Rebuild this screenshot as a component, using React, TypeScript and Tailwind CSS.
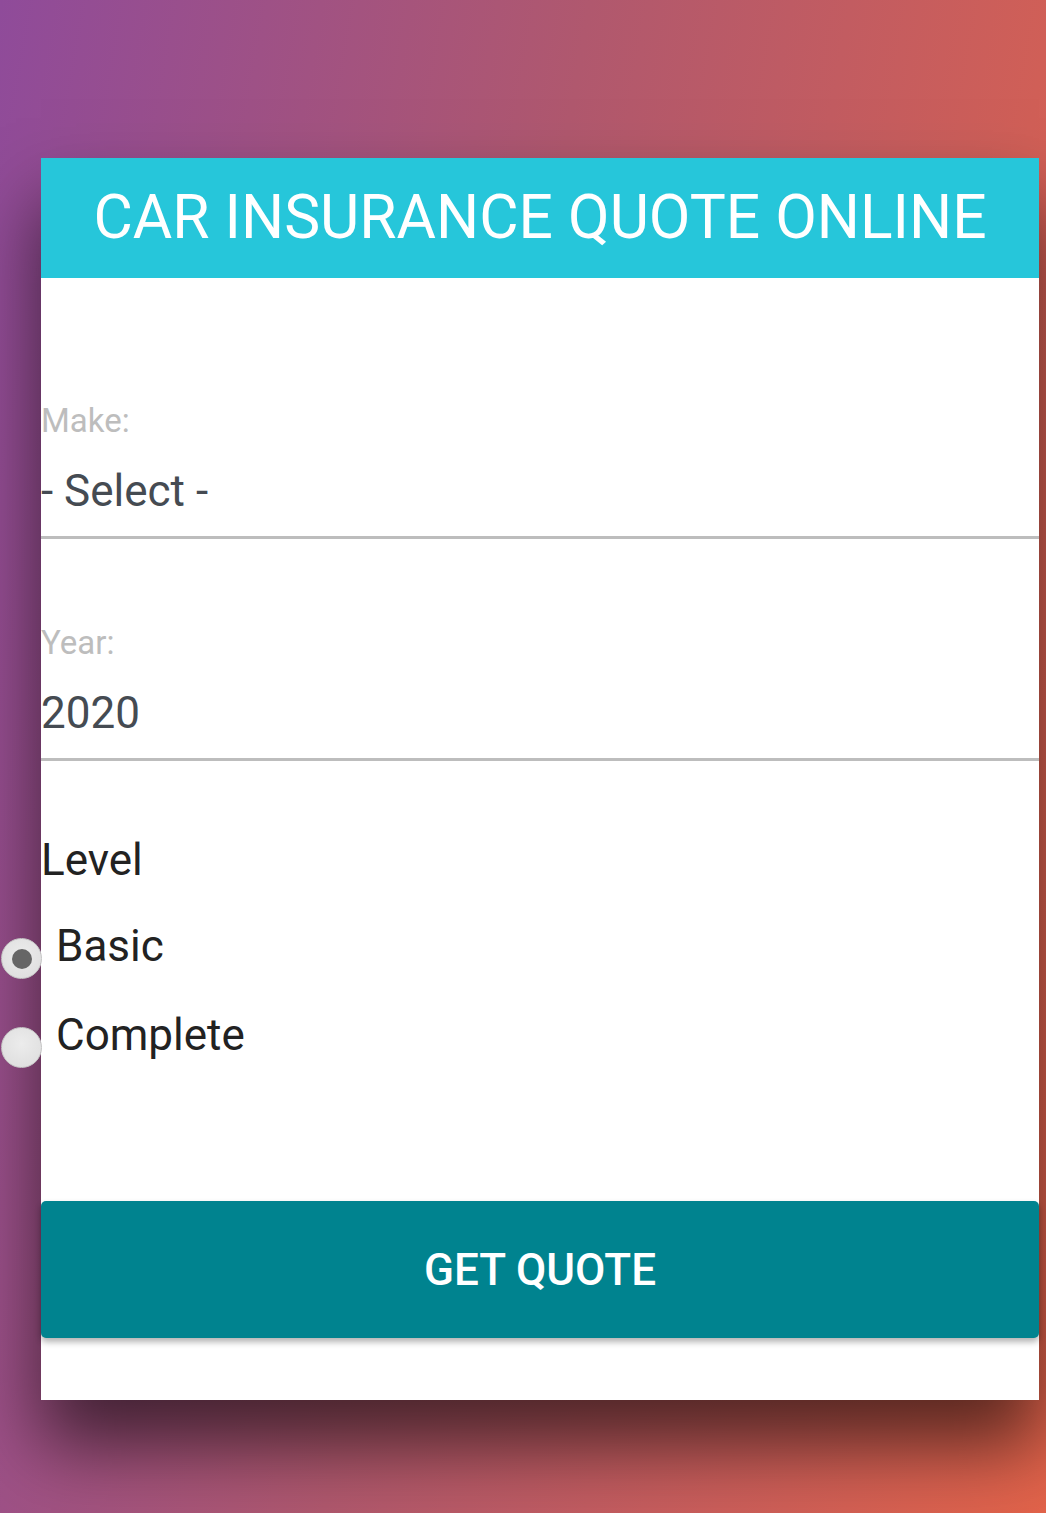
import React from "react";

export default function App() {
  return (
    <div
      className="relative w-[1046px] h-[1513px] overflow-hidden pt-[158px] pl-[41px]"
      style={{ fontFamily: "Roboto, 'Liberation Sans', sans-serif" }}
    >
      <div className="absolute inset-0 bg-[linear-gradient(100deg,#8f4b9a_0%,#b0586e_45%,#e2634a_100%)]" />
      <div className="relative w-[998px] h-[1242px] bg-white shadow-[0_45px_70px_rgba(0,0,0,0.6)]">
        <div className="h-[120px] bg-[#26c6da] flex items-center justify-center">
          <h1 className="text-white text-[60.5px] leading-none font-normal">
            CAR INSURANCE QUOTE ONLINE
          </h1>
        </div>
        <div className="pt-[123px]">
          <div className="text-[#bdbdbd] text-[33px] leading-[40px]">Make:</div>
          <div className="text-[#454b52] text-[44px] leading-[56px] mt-[22px] pb-[17px] border-b-[3px] border-[#bdbdbd]">
            - Select -
          </div>
          <div className="text-[#bdbdbd] text-[33px] leading-[40px] mt-[84px]">Year:</div>
          <div className="text-[#454b52] text-[44px] leading-[56px] mt-[22px] pb-[17px] border-b-[3px] border-[#bdbdbd]">
            2020
          </div>
          <div className="text-[#222] text-[44px] leading-[56px] mt-[71px]">Level</div>
          <div className="mt-[30px] flex flex-col gap-[28px]">
            <label className="flex items-start -ml-[40px]">
              <span className="w-[41px] h-[41px] rounded-full bg-[radial-gradient(circle_at_50%_40%,#ececec,#dcdcdc)] border border-[#c4c4c4] flex items-center justify-center mt-[20px] shrink-0">
                <span className="w-[20px] h-[20px] rounded-full bg-[#666]" />
              </span>
              <span className="ml-[14px] text-[#222] text-[44px] leading-[56px]">Basic</span>
            </label>
            <label className="flex items-start -ml-[40px]">
              <span className="w-[41px] h-[41px] rounded-full bg-[radial-gradient(circle_at_50%_40%,#ececec,#dcdcdc)] border border-[#c4c4c4] mt-[20px] shrink-0" />
              <span className="ml-[14px] text-[#222] text-[44px] leading-[56px]">Complete</span>
            </label>
          </div>
          <button className="mt-[133px] w-full h-[137px] bg-[#00838f] rounded-[5px] shadow-[0_4px_6px_rgba(0,0,0,0.3)] text-white text-[44px] font-medium flex items-center justify-center">
            GET QUOTE
          </button>
        </div>
      </div>
    </div>
  );
}
